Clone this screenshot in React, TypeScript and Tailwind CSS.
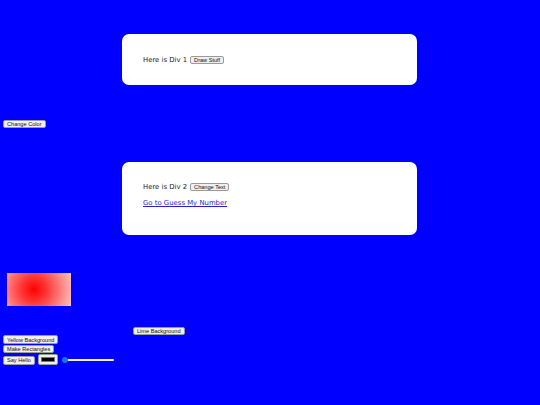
import { useState } from 'react'

const btn =
  "block bg-[#efefef] border border-[#9a9a9a] rounded-[2px] px-[3px] h-[8px] text-[5.6px] leading-[6px] text-[#111] font-['Liberation_Sans',Arial,sans-serif] whitespace-nowrap"

export default function App() {
  const [level, setLevel] = useState(0)

  return (
    <div className="w-[540px] h-[405px] overflow-hidden bg-[#0000ff] pt-[34px] font-['DejaVu_Sans',Verdana,sans-serif]">
      {/* Div 1 */}
      <div className="ml-[122px] w-[295px] h-[51px] bg-white rounded-[7px] flex items-center pl-[21px] pt-[1px]">
        <span className="text-[6.9px] text-[#222]">Here is Div 1</span>
        <button className={btn + ' ml-[3px]'}>Draw Stuff</button>
      </div>

      <button className={btn + ' ml-[3px] mt-[35px]'}>Change Color</button>

      {/* Div 2 */}
      <div className="ml-[122px] mt-[34px] w-[295px] h-[73px] bg-white rounded-[7px] pl-[21px] pt-[20px]">
        <div className="flex items-center">
          <span className="text-[6.9px] text-[#222]">Here is Div 2</span>
          <button className={btn + ' ml-[3px]'}>Change Text</button>
        </div>
        <a href="#" className="block mt-[6px] text-[6.9px] text-[#2a1fd0] underline">
          Go to Guess My Number
        </a>
      </div>

      {/* canvas */}
      <div className="ml-[7px] mt-[38px] w-[64px] h-[33px] bg-[radial-gradient(circle_at_42%_50%,#ff0000_0%,#ff3333_30%,#ffc4c4_100%)]" />

      <button className={btn + ' ml-[133px] mt-[21px]'}>Lime Background</button>
      <button className={btn + ' ml-[3px] h-[9px]'}>Yellow Background</button>
      <button className={btn + ' ml-[3px] mt-[1px]'}>Make Rectangles</button>

      <div className="flex items-center ml-[3px] mt-[1px] gap-[3px]">
        <button className={btn + ' h-[9px] mt-[1px]'}>Say Hello</button>
        <div className="w-[20px] h-[11px] bg-[#efefef] border border-[#9a9a9a] rounded-[2px] p-[2px]">
          <div className="w-full h-full bg-black border border-[#777]" />
        </div>
        <div className="relative w-[54px] h-[8px] flex items-center ml-[1px]">
          <div className="absolute left-[2px] right-[2px] h-[2px] bg-[#f0f0f0] rounded-full" />
          <input
            type="range"
            value={level}
            onChange={e => setLevel(Number(e.target.value))}
            className="absolute left-0 w-[54px] h-[8px] opacity-0"
          />
          <div className="absolute left-0 w-[6px] h-[6px] rounded-full bg-[#1a73e8]" />
        </div>
      </div>
    </div>
  )
}
